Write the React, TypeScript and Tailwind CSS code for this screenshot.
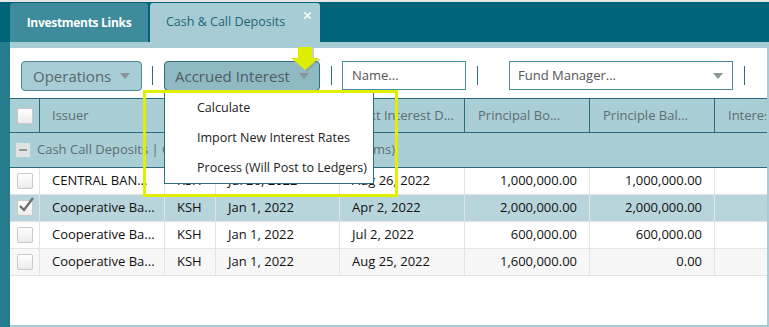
import { X } from "lucide-react";

const cols = "grid-cols-[30px_125px_51px_124px_125px_125px_125px_51px]";

type Row = {
  issuer: string;
  ccy: string;
  start: string;
  next: string;
  principal: string;
  balance: string;
  checked?: boolean;
  bg: string;
};

const rows: Row[] = [
  { issuer: "CENTRAL BAN...", ccy: "KSH", start: "Jul 26, 2022", next: "Aug 26, 2022", principal: "1,000,000.00", balance: "1,000,000.00", bg: "bg-white" },
  { issuer: "Cooperative Ba...", ccy: "KSH", start: "Jan 1, 2022", next: "Apr 2, 2022", principal: "2,000,000.00", balance: "2,000,000.00", checked: true, bg: "bg-[#b8d5dc]" },
  { issuer: "Cooperative Ba...", ccy: "KSH", start: "Jan 1, 2022", next: "Jul 2, 2022", principal: "600,000.00", balance: "600,000.00", bg: "bg-white" },
  { issuer: "Cooperative Ba...", ccy: "KSH", start: "Jan 1, 2022", next: "Aug 25, 2022", principal: "1,600,000.00", balance: "0.00", bg: "bg-[#f7f7f7]" },
];

function Caret() {
  return (
    <svg width="10" height="6" viewBox="0 0 10 6" className="shrink-0">
      <path d="M0 0h10L5 6z" fill="#8a9598" />
    </svg>
  );
}

function Checkbox({ checked }: { checked?: boolean }) {
  return (
    <div className="relative w-[16px] h-[16px] rounded-[2px] border border-[#c9c9c9] bg-gradient-to-b from-white to-[#ececec]">
      {checked && (
        <svg width="18" height="16" viewBox="0 0 18 16" className="absolute -top-[4px] left-[0px]">
          <path d="M2 9l4 4L15 1" fill="none" stroke="#6f6f6f" strokeWidth="2.4" />
        </svg>
      )}
    </div>
  );
}

function Sep() {
  return <div className="w-px h-[19px] bg-[#2b6f80] mt-[5px]" />;
}

export default function App() {
  return (
    <div className="relative w-[769px] h-[327px] bg-white border-t-2 border-[#e6e6e6] flex flex-col overflow-hidden font-['Open_Sans',sans-serif]">
      {/* tab bar */}
      <div className="h-[40px] bg-[#006479] flex items-end pl-[10px] gap-[2px]">
        <div className="h-[39px] w-[138px] bg-[#3d8b9b] rounded-t-[3px] flex items-center justify-center text-white font-bold text-[12px] tracking-[-0.3px]">
          Investments Links
        </div>
        <div className="relative h-[39px] w-[170px] bg-[#a7ccd5] rounded-t-[3px] flex items-center pl-[16px] text-[#1e6678] text-[12.5px]">
          Cash &amp; Call Deposits
          <X className="absolute top-[7px] right-[7px] w-[11px] h-[11px] text-white" strokeWidth={3} />
        </div>
      </div>

      <div className="flex-1 flex">
        <div className="w-[10px] bg-[#247c8d]" />
        <div className="flex-1 flex flex-col border-r-2 border-b-2 border-[#a7ccd5]">
          <div className="h-[6px] bg-[#a7ccd5]" />

          {/* toolbar */}
          <div className="h-[50px] flex items-start pt-[13px] pl-[11px]">
            <div className="w-[121px] h-[30px] rounded-[4px] border border-[#4b8a99] bg-[#a8cdd6] flex items-center justify-between pl-[11px] pr-[11px] text-[15px] text-[#5a666b]">
              Operations
              <Caret />
            </div>
            <div className="ml-[10px]"><Sep /></div>
            <div className="ml-[11px] w-[156px] h-[30px] rounded-[4px] border border-[#2b6f80] bg-[#8fbac4] flex items-center justify-between pl-[10px] pr-[10px] text-[15px] text-[#505c61]">
              Accrued Interest
              <Caret />
            </div>
            <div className="ml-[11px]"><Sep /></div>
            <div className="ml-[10px] w-[124px] h-[29px] border border-[#4d8c9a] flex items-center pl-[9px] text-[13px] text-[#555]">
              Name...
            </div>
            <div className="ml-[11px]"><Sep /></div>
            <div className="ml-[31px] w-[224px] h-[29px] border border-[#4d8c9a] flex items-center justify-between pl-[8px] pr-[9px] text-[13px] text-[#555]">
              Fund Manager...
              <Caret />
            </div>
            <div className="ml-[11px]"><Sep /></div>
          </div>

          {/* table header */}
          <div className={`grid ${cols} h-[35px] bg-[#a9ced6] border-y border-[#2a6b7b] text-[13px] text-[#5e6d72]`}>
            <div className="flex items-center justify-center border-r border-[#2a6b7b]"><Checkbox /></div>
            <div className="flex items-center pl-[12px] border-r border-[#2a6b7b]">Issuer</div>
            <div className="flex items-center pl-[12px] border-r border-[#2a6b7b]">Ccy</div>
            <div className="flex items-center pl-[12px] border-r border-[#2a6b7b] whitespace-nowrap overflow-hidden">Start Date</div>
            <div className="flex items-center pl-[12px] border-r border-[#2a6b7b] whitespace-nowrap overflow-hidden">Next Interest D...</div>
            <div className="flex items-center pl-[13px] border-r border-[#2a6b7b] whitespace-nowrap overflow-hidden">Principal Bo...</div>
            <div className="flex items-center pl-[13px] border-r border-[#2a6b7b] whitespace-nowrap overflow-hidden">Principle Bal...</div>
            <div className="flex items-center pl-[13px] whitespace-nowrap overflow-hidden">Interest</div>
          </div>

          {/* group row */}
          <div className="h-[35px] bg-[#a9ced6] border-b border-[#2a6b7b] flex items-center pl-[6px] gap-[7px] text-[13px] text-[#5e6d72] whitespace-nowrap">
            <div className="w-[14px] h-[14px] bg-[#dfe3e4] flex items-center justify-center">
              <div className="w-[8px] h-[2px] bg-[#8f999c]" />
            </div>
            Cash Call Deposits | General Fund All Investments (4 items)
          </div>

          {/* rows */}
          {rows.map((r, i) => (
            <div key={i} className={`grid ${cols} h-[27px] ${r.bg} border-b border-[#e3e3e3] text-[13px] text-[#111]`}>
              <div className="flex items-center justify-center border-r border-[#e3e3e3]"><Checkbox checked={r.checked} /></div>
              <div className="flex items-center pl-[12px] border-r border-[#e3e3e3] whitespace-nowrap">{r.issuer}</div>
              <div className="flex items-center pl-[12px] border-r border-[#e3e3e3]">{r.ccy}</div>
              <div className="flex items-center pl-[12px] border-r border-[#e3e3e3] whitespace-nowrap">{r.start}</div>
              <div className="flex items-center pl-[12px] border-r border-[#e3e3e3] whitespace-nowrap">{r.next}</div>
              <div className="flex items-center justify-end pr-[12px] border-r border-[#e3e3e3]">{r.principal}</div>
              <div className="flex items-center justify-end pr-[12px] border-r border-[#e3e3e3]">{r.balance}</div>
              <div />
            </div>
          ))}
        </div>
      </div>

      {/* dropdown menu */}
      <div className="absolute left-[164px] top-[90px] w-[210px] h-[92px] bg-white border border-[#2b6f80] flex flex-col pl-[32px] pt-[1px] text-[12.5px] text-[#222]">
        <div className="h-[30px] flex items-center">Calculate</div>
        <div className="h-[30px] flex items-center">Import New Interest Rates</div>
        <div className="h-[30px] flex items-center whitespace-nowrap">Process (Will Post to Ledgers)</div>
      </div>

      {/* yellow highlight */}
      <div className="absolute left-[143px] top-[88px] w-[255px] h-[107px] border-[3px] border-[#e1f000]" />

      {/* yellow arrow */}
      <svg className="absolute left-[289px] top-[43px]" width="34" height="30" viewBox="0 0 34 30">
        <path d="M11 3h14v11h7L18 27 4 14h7z" fill="#8a9a86" opacity="0.45" />
        <path d="M9 2h14v11h7L16 25 2 13h7z" fill="#dfee00" />
      </svg>
    </div>
  );
}
